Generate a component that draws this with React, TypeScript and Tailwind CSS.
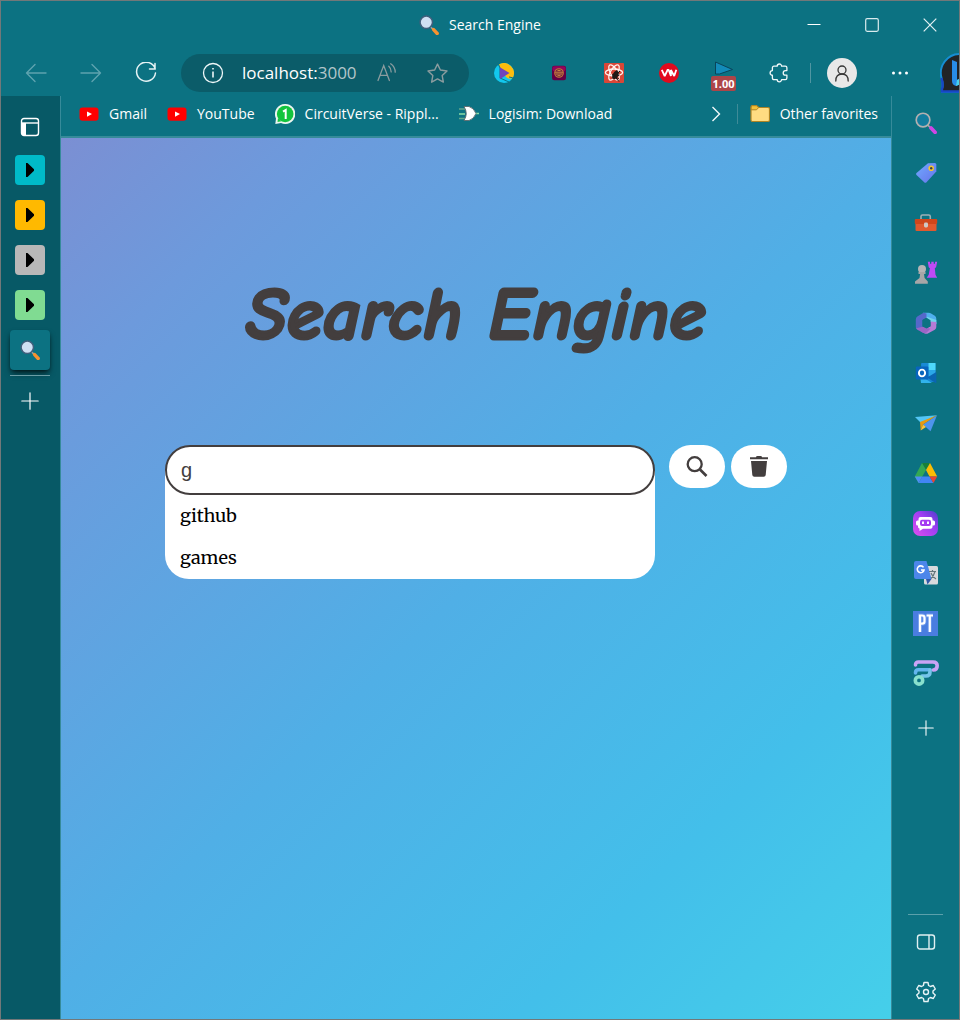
import { useState } from "react";
import type { ReactNode } from "react";

function Magnifier({ handle = "#f7922f", rim = "#3f5f7c", lens = "#cfe0f3", className = "size-5" }) {
  return (
    <svg viewBox="0 0 20 20" className={className} aria-hidden="true">
      <path d="M11.5 12 14.6 14.6" stroke="#a9a3a6" strokeWidth="1.6" />
      <path d="m14.6 14.6 3.6 3.9" stroke={handle} strokeWidth="3.4" strokeLinecap="round" />
      <circle cx="7.3" cy="7.3" r="6.200" fill={lens} stroke={rim} strokeWidth="1.5" />
    </svg>
  );
}

function YouTubeIcon() {
  return (
    <svg viewBox="0 0 20 20" className="size-5" aria-hidden="true">
      <rect x="0.5" y="3.4" width="19" height="13.4" rx="3" fill="#f00" />
      <path d="m8 7.4 5 2.7-5 2.7z" fill="#fff" />
    </svg>
  );
}

function Arrow({ flip = false }) {
  return (
    <svg viewBox="0 0 22 22" className={flip ? "size-[22px] rotate-180" : "size-[22px]"} fill="none" stroke="#5ea3af" strokeWidth="1.4" strokeLinecap="round" strokeLinejoin="round" aria-hidden="true">
      <path d="M21 11H1.5M10 2.5 1.5 11l8.500 8.500" />
    </svg>
  );
}

function Plus({ className }: { className: string }) {
  return (
    <svg viewBox="0 0 18 18" className={className} stroke="#fff" strokeWidth="1.200" strokeLinecap="round" aria-hidden="true">
      <path d="M9 .8v16.400M.8 9h16.400" />
    </svg>
  );
}

const extensions: { name: string; icon: ReactNode }[] = [
  {
    name: "Video player",
    icon: (
      <svg viewBox="0 0 20 20" className="size-5">
        <circle cx="10" cy="10" r="10" fill="#12c8ee" />
        <path d="M5 1.400A10 10 0 0 1 18.700 14.800Q15 17 12 14L6 5z" fill="#fdbd0d" />
        <path d="M4.500 1.500 6 5v10l9 4M15 14l3.800.8" stroke="#0c7282" strokeWidth="1" fill="none" />
        <path d="M5.800 4.200 15.500 10l-9.700 6.200z" fill="#7044bb" />
      </svg>
    ),
  },
  {
    name: "Emblem",
    icon: (
      <svg viewBox="0 0 16 16" className="size-4">
        <rect x="1" y=".8" width="14" height="14.400" rx="2.200" fill="#650044" />
        <rect x="1.500" y="1.200" width="13" height="5" rx="2" fill="#94045b" />
        <circle cx="8" cy="8" r="4.300" fill="#70213a" stroke="#be7a39" strokeWidth="1.100" />
        <path d="M4 7.200h8M4.500 9h7M6.500 5.500h3M6.500 10.600h3" stroke="#ca8341" />
      </svg>
    ),
  },
  {
    name: "Component inspector",
    icon: (
      <svg viewBox="0 0 20 20" className="size-5">
        <rect width="20" height="20" rx="1" fill="#da4637" />
        <g fill="none" stroke="#fff3ef" strokeWidth="1.300">
          <ellipse cx="10" cy="9.500" rx="8.600" ry="3.500" />
          <ellipse cx="10" cy="9.500" rx="8.600" ry="3.500" transform="rotate(60 10 9.500)" />
          <ellipse cx="10" cy="9.500" rx="8.600" ry="3.500" transform="rotate(-60 10 9.500)" />
        </g>
        <ellipse cx="11.500" cy="12" rx="2.800" ry="4.400" transform="rotate(28 11.500 12)" fill="#201816" />
        <path d="m8 11.500 7 4.500M8.500 15l7-3M12 9l1-2M14 10l2-2M10 12.500l5 6" stroke="#201816" strokeWidth="1" />
      </svg>
    ),
  },
  {
    name: "VW reader",
    icon: (
      <svg viewBox="0 0 20 20" className="size-5">
        <circle cx="10" cy="10" r="10" fill="#e20a1d" />
        <path d="m2.800 6.800 2.900 6.200 2.900-6.200M7.900 6.800h1.700l2.300 6.200V7l3.300 6 2.100-6.200" fill="none" stroke="#fff" strokeWidth="1.800" strokeLinejoin="bevel" />
      </svg>
    ),
  },
];

function TextAloud() {
  return (
    <svg viewBox="0 0 20 20" className="size-5" fill="none" stroke="#8b9c9f" strokeWidth="1.300" strokeLinecap="round" aria-hidden="true">
      <path d="m1 17.500 5.700-15 5.700 15M3 12.300h7.500M11.800 3.300q2.400 2.200 2.400 5.600M13.700.8q4.500 3.200 4.500 8.400" />
    </svg>
  );
}

const railApps: { name: string; icon: ReactNode }[] = [
  { name: "Search", icon: <Magnifier handle="#cf47e5" rim="#b3b0b0" lens="#127d9f" className="size-[22px]" /> },
  {
    name: "Shopping",
    icon: (
      <svg viewBox="0 0 22 22" className="size-[22px]">
        <defs><linearGradient id="tag" x2="1" y2="1"><stop stopColor="#71aaff" /><stop offset="1" stopColor="#6673e9" /></linearGradient></defs>
        <path d="M13 1.200 19.800 1q1.500 0 1.500 1.500v7L11.500 20.300q-1.200 1-2.300 0L1.500 13q-1-1 0-2.100z" fill="url(#tag)" />
        <circle cx="16.200" cy="6.200" r="2.800" fill="#f4c22f" /><circle cx="16.200" cy="6.200" r="1.200" fill="#354155" />
      </svg>
    ),
  },
  {
    name: "Tools",
    icon: (
      <svg viewBox="0 0 24 22" className="h-[22px] w-6">
        <path d="M7 7V4.500Q7 3 8.500 3h6.300q1.500 0 1.500 1.500V7" fill="none" stroke="#9db0b5" strokeWidth="1.600" />
        <rect x="1.500" y="9" width="21" height="10" rx="1" fill="#e0592e" />
        <rect x=".8" y="7" width="22.400" height="5" rx="1" fill="#cf461b" />
        <rect x="10" y="10.500" width="4" height="5" rx="1.400" fill="#d0c8c5" />
      </svg>
    ),
  },
  {
    name: "Games",
    icon: (
      <svg viewBox="0 0 24 24" className="size-6">
        <path d="M13.800.8h2.200v2h1.300v-2h2.400v2H21v-2h2.200l-1.100 5.500-1.300 1 .7 6.500 1.700 3H12.700l2-3 1.200-6.500-1.200-1z" fill="#bf4af6" />
        <circle cx="8" cy="8" r="4" fill="#b6b4b5" />
        <path d="M4.500 11h7v2H10l.6 4 3.200 3.500v2.200H1v-2.200L5.500 17l.6-4H4.500z" fill="#a8a6a7" />
      </svg>
    ),
  },
  {
    name: "Microsoft 365",
    icon: (
      <svg viewBox="0 0 22 22" className="size-[22px]">
        <path d="M8 .8h5.500q1.500 0 3 .9l3.300 2q1.500 1 1.500 3V12l-6-3.500L9 5z" fill="#4fb0ef" />
        <path d="M11 4.500 21.300 8v3.500q0 1-1 1.500l-5-3z" fill="#72d4ec" />
        <path d="M21.300 10v5q0 1.800-1.500 2.700l-6.500 3.500q-2 1-4 0L6 19.300l9.500-5V9.500z" fill="#b77bd5" />
        <path d="M8.500.8 2.300 4.500Q.8 5.500.8 7.500V15q0 1.700 1.500 2.600l1.500.9 3.700-2.300V8l4-2.500V1.500z" fill="#5568ca" />
        <path d="M1.200 16.200q.4 1 1.500 1.600l5 3q2 1 4-.2l3.800-3.800-7.900-2z" fill="#9b65c5" />
        <path d="m7.500 8 4-2.300 4 2.500v6l-4 2.300-4-2.300z" fill="#0c7282" />
      </svg>
    ),
  },
  {
    name: "Outlook",
    icon: (
      <svg viewBox="0 0 22 22" className="size-[22px]">
        <rect x="6" y="1" width="14.500" height="19" rx="1" fill="#1685d3" />
        <path d="M7 1h6.500v7H7z" fill="#198bd5" /><path d="M13.500 1h7v7h-7z" fill="#4fd8fa" /><path d="M13.500 8h7v6h-7z" fill="#2ba7e8" />
        <path d="m21.300 10-9 5.500 8.200 5.500h.8z" fill="#0b65b1" /><path d="M5 13.500 17 21H6z" fill="#31b3ed" />
        <rect x=".8" y="4.500" width="12.600" height="13" rx="1.200" fill="#0865bd" />
        <ellipse cx="7" cy="11" rx="3.100" ry="3.400" fill="none" stroke="#fff" strokeWidth="1.900" />
      </svg>
    ),
  },
  {
    name: "Drop",
    icon: (
      <svg viewBox="0 0 24 22" className="h-[22px] w-6">
        <path d="m1 5 22-1.800L7 11z" fill="#54c6f6" /><path d="m23 3.200-6.500 16L9 12.500z" fill="#4f94ed" />
        <path d="M6 10 23 3.200 9 12.500l-2.300 6z" fill="#e99a10" /><path d="m9 12.500 3 2.500-5.300 3.500z" fill="#ffc33a" />
      </svg>
    ),
  },
  {
    name: "Google Drive",
    icon: (
      <svg viewBox="0 0 24 22" className="h-[22px] w-6">
        <path d="M8 1h8l-4 7z" fill="#188038" /><path d="M8 1 .8 14.500l3.800 6.500L12 8z" fill="#34a853" />
        <path d="M16 1 23.200 14.500h-7.700L12 8z" fill="#fbbc04" /><path d="m4.600 21 3.700-6.500h7.200l3.900 6.500z" fill="#4285f4" />
        <path d="M.8 14.500h7.500L4.600 21z" fill="#4c8cf5" /><path d="M15.500 14.500h7.700L19.400 21z" fill="#ea4335" />
      </svg>
    ),
  },
  {
    name: "Chat bot",
    icon: (
      <svg viewBox="0 0 25 25" className="size-[25px]">
        <defs><linearGradient id="bot" x1="1" x2="0" y2="1"><stop stopColor="#4c3fc9" /><stop offset=".4" stopColor="#9d3df3" /><stop offset="1" stopColor="#dd50ee" /></linearGradient></defs>
        <rect width="25" height="25" rx="7" fill="url(#bot)" />
        <path d="M7.500 6h10q2 0 2 2v1.500h1q1.500 0 1.500 1.500v2q0 1.500-1.500 1.500h-1V16q0 1.700-2 1.700H10L6.500 20v-2.500q-1.500-.3-1.500-1.500v-1.500H4.500Q3 14.500 3 13v-2q0-1.500 1.500-1.500H5.500V8q0-2 2-2z" fill="#fff" />
        <rect x="7" y="8.700" width="11" height="6.200" rx="2" fill="#a53af1" /><path d="M10 10.500v2.600M15 10.500v2.600" stroke="#fff" strokeWidth="1.900" />
      </svg>
    ),
  },
  {
    name: "Google Translate",
    icon: (
      <svg viewBox="0 0 24 24" className="size-6">
        <rect x="10" y="5" width="14" height="18.500" rx="1.500" fill="#d8dadd" />
        <path d="M2 0h10.500l5 18H2q-2 0-2-2V2q0-2 2-2z" fill="#4c86ea" /><path d="m17.500 18-4 5.500L12 18z" fill="#3158a9" />
        <path d="M9.500 6.400A3.400 3.400 0 1 0 10 9H7" fill="none" stroke="#fff" strokeWidth="1.600" />
        <path d="M15 10.500h7M18.500 9v1.500M21 10.500q-1.500 5-4 7M17 12q1.500 4 5 6" fill="none" stroke="#64777c" strokeWidth="1.200" />
      </svg>
    ),
  },
  {
    name: "PT",
    icon: (
      <svg viewBox="0 0 25 25" className="size-[25px]">
        <rect width="25" height="25" fill="#4a7de0" />
        <path d="M7 21V4.500h2q2.500 0 2.500 2.300v3.700q0 2.200-2.500 2.200H7M13.500 4.500h6.500M16.800 4.500V21" fill="none" stroke="#a9caff" strokeWidth="4" opacity=".35" />
        <path d="M7 21V4.500h2q2.500 0 2.500 2.300v3.700q0 2.200-2.500 2.200H7M13.500 4.500h6.500M16.800 4.500V21" fill="none" stroke="#fff" strokeWidth="2.200" />
      </svg>
    ),
  },
  {
    name: "Flow",
    icon: (
      <svg viewBox="0 0 26 26" className="size-[26px]" fill="none" strokeWidth="3.600" strokeLinecap="round">
        <path d="M2.500 5q0-3 3-3H20q4.200 0 4.200 3.800 0 4.200-4 4.200" stroke="#c9a3f5" />
        <path d="M2.500 13q0-3.200 3-3.200H17" stroke="#62b5ed" /><path d="M17 10v2q0 4-4 4H9" stroke="#75c4ea" />
        <circle cx="6" cy="20.400" r="3.700" stroke="#88e0cd" />
      </svg>
    ),
  },
];

function TabGroup({ label, className }: { label: string; className: string }) {
  return (
    <button aria-label={label} className={`flex size-[30px] items-center justify-center rounded ${className}`}>
      <svg viewBox="0 0 8 14" className="h-3.5 w-2" aria-hidden="true"><path d="M0 0h1.500L8 6.200v1.600L1.500 14H0z" /></svg>
    </button>
  );
}

function TitleBar() {
  return (
    <header className="flex h-12 items-center">
      <div className="w-[174px]" />
      <div className="flex flex-1 items-center justify-center gap-2.5 text-sm">
        <Magnifier />
        <span>Search Engine</span>
      </div>
      <div className="flex w-[174px] items-center">
        <button aria-label="Minimize" className="flex h-8 flex-1 items-center justify-center"><svg viewBox="0 0 14 14" className="size-3.5" stroke="#fff"><path d="M.5 6.500h13" /></svg></button>
        <button aria-label="Maximize" className="flex h-8 flex-1 items-center justify-center"><svg viewBox="0 0 14 14" className="size-3.5" fill="none" stroke="#d9ebee" strokeWidth="1.200"><rect x=".7" y=".7" width="12.600" height="12.600" rx="1.500" /></svg></button>
        <button aria-label="Close" className="flex h-8 flex-1 items-center justify-center"><svg viewBox="0 0 14 14" className="size-3.5" stroke="#e5f2f4" strokeWidth="1.200"><path d="m.7.7 12.600 12.600m0-12.600L.7 13.300" /></svg></button>
      </div>
    </header>
  );
}

function NavBar() {
  return (
    <nav className="flex h-12 items-center pl-[7px]">
      <button aria-label="Back" className="flex w-[55px] shrink-0 justify-center"><Arrow /></button>
      <button aria-label="Forward" className="flex w-[55px] shrink-0 justify-center"><Arrow flip /></button>
      <button aria-label="Refresh" className="flex w-[55px] shrink-0 justify-center">
        <svg viewBox="0 0 22 22" className="size-[22px]" fill="none" stroke="#e6f3f5" strokeWidth="1.500" strokeLinecap="round"><path d="M20.200 7A9.500 9.500 0 1 0 20.500 11M20 1.500V7h-5.500" /></svg>
      </button>
      <div className="mr-[7px] ml-2 flex h-[38px] min-w-0 flex-1 items-center rounded-full bg-[#0b5c69] pr-5 pl-[21px]">
        <svg viewBox="0 0 22 22" className="size-[22px] shrink-0" fill="none" stroke="#eef7f8" strokeWidth="1.300" aria-hidden="true"><circle cx="11" cy="11" r="9.500" /><path d="M11 9.500v6M11 6v1.600" strokeWidth="1.600" /></svg>
        <p className="ml-[18px] min-w-0 flex-1 text-[17px] text-white">localhost:<span className="text-[#b3c6ca]">3000</span></p>
        <button aria-label="Read aloud" className="mr-[29px]"><TextAloud /></button>
        <button aria-label="Add to favorites">
          <svg viewBox="0 0 24 24" className="size-[23px]" fill="none" stroke="#8b9c9f" strokeWidth="1.500" strokeLinejoin="round"><path d="m12 2.200 3 6.200 6.900.9-5 4.800 1.200 6.900-6.100-3.300L5.900 21l1.200-6.900-5-4.800 6.900-.9z" /></svg>
        </button>
      </div>
      {extensions.map((e) => (
        <button key={e.name} aria-label={e.name} className="flex w-[55px] shrink-0 justify-center">{e.icon}</button>
      ))}
      <button aria-label="Playback speed" className="relative flex h-10 w-[55px] shrink-0 justify-center pt-2">
        <svg viewBox="0 0 20 14" className="h-3.5 w-5"><path d="M1.500 1v12h4L18.500 8.500z" fill="#138bb9" stroke="#09455a" /></svg>
        <span className="absolute top-[23px] rounded-xs bg-[#ad4548] px-0.5 font-['Noto_Sans'] text-[11px] leading-[15px] font-bold text-white">1.00</span>
      </button>
      <button aria-label="Extensions" className="flex w-[55px] shrink-0 justify-center">
        <svg viewBox="0 0 20 20" className="size-5" fill="none" stroke="#f0f8f9" strokeWidth="1.300" strokeLinejoin="round"><path d="M5 3.200h3.200a2.200 2.200 0 0 1 4.400 0h3.700q1.600 0 1.600 1.600v2.800h-1.400a2.200 2.200 0 0 0 0 4.600h1.400V15q0 1.600-1.600 1.600h-3.700a2.200 2.200 0 0 1-4.400 0H5q-1.600 0-1.600-1.600v-2.800a2.200 2.200 0 0 1 0-4.600V4.800Q3.400 3.200 5 3.200z" /></svg>
      </button>
      <span className="ml-1 h-5 w-px shrink-0 bg-[#5096a2]" />
      <button aria-label="Profile" className="ml-4 flex size-[30px] shrink-0 items-center justify-center rounded-full bg-[#e8e8e8]">
        <svg viewBox="0 0 18 18" className="size-[18px]" fill="none" stroke="#363636" strokeWidth="1.300" strokeLinecap="round"><circle cx="9" cy="6" r="4" /><path d="M2.800 17q0-7 6.200-7t6.200 7" /></svg>
      </button>
      <button aria-label="Settings and more" className="ml-7 flex w-[30px] shrink-0 justify-center">
        <svg viewBox="0 0 18 6" className="w-[18px]" fill="#fff"><circle cx="2.500" cy="3" r="1.500" /><circle cx="9" cy="3" r="1.500" /><circle cx="15.500" cy="3" r="1.500" /></svg>
      </button>
      <button aria-label="Bing chat" className="ml-[25px] w-[19px] shrink-0 overflow-hidden">
        <svg viewBox="0 0 40 40" className="size-10 max-w-none">
          <path d="M20 1a19 19 0 0 1 0 38H2V36q1.500-4-.5-11A19 19 0 0 1 20 1z" fill="#222426" stroke="#168ed2" strokeWidth="2" />
          <path d="M1.500 25q2 7 .5 11v2.500H20" fill="none" stroke="#1747c5" strokeWidth="2.400" />
          <path d="M12 7 17 9v18l8-4v6l-9 4q-4-1-4-5z" fill="#288de8" /><path d="m17 27 8-4v6l-9 4z" fill="#48d3ed" />
        </svg>
      </button>
    </nav>
  );
}

function Bookmark({ label, icon }: { label: string; icon: ReactNode }) {
  return <a href="#" className="flex shrink-0 items-center gap-2.5">{icon}<span>{label}</span></a>;
}

function BookmarksBar() {
  return (
    <div className="flex h-[42px] items-center gap-5 border-b-2 border-[#368b9a] pr-[13px] pb-1 pl-[18px] text-sm">
      <Bookmark label="Gmail" icon={<YouTubeIcon />} />
      <Bookmark label="YouTube" icon={<YouTubeIcon />} />
      <Bookmark
        label="CircuitVerse - Rippl..."
        icon={
          <svg viewBox="0 0 20 20" className="size-5" aria-hidden="true">
            <path d="M10 0a10 10 0 1 1-4 19L.3 20 1 14.500A10 10 0 0 1 10 0z" fill="#ecf5f0" /><circle cx="10.200" cy="10" r="8.300" fill="#13c43d" /><path d="m3 14-.5 4 4-.8z" fill="#13c43d" />
            <path d="M8 7.600 10.700 6v9" fill="none" stroke="#fff" strokeWidth="2" />
          </svg>
        }
      />
      <Bookmark
        label="Logisim: Download"
        icon={
          <svg viewBox="0 0 20 20" className="size-5" aria-hidden="true">
            <path d="M0 5h6M0 14.500h6" stroke="#61a68c" strokeWidth="1.500" /><path d="M0 10h6M16 9.500h4" stroke="#8bdda6" strokeWidth="1.500" />
            <path d="M5 2.500h5q5 1.500 7 7-2 5.500-7 7H5q4.500-7 0-14z" fill="#fff" stroke="#5d6a6d" strokeWidth=".9" />
          </svg>
        }
      />
      <div className="ml-auto flex shrink-0 items-center">
        <button aria-label="More favorites" className="mr-4"><svg viewBox="0 0 10 18" className="h-[18px] w-2.5" fill="none" stroke="#f2f9fa" strokeWidth="1.400"><path d="m1.500 2 7 7-7 7" /></svg></button>
        <span className="mr-3 h-5 w-px bg-[#3f8b98]" />
        <Bookmark
          label="Other favorites"
          icon={
            <svg viewBox="0 0 20 20" className="size-5" aria-hidden="true">
              <path d="M1 4.500V3q0-1.500 1.500-1.500h4l2.300 2H18q1.500 0 1.500 1.500v11q0 1.500-1.500 1.500H2.500Q1 17.500 1 16z" fill="#ffdc82" stroke="#ae8424" strokeWidth="1.200" />
              <path d="M1.200 5.800V3q0-1.300 1.300-1.300h4l2 2-2 2.100z" fill="#f4c239" stroke="#ae8424" />
            </svg>
          }
        />
      </div>
    </div>
  );
}

function SearchPage() {
  const [query, setQuery] = useState("g");
  return (
    <main className="flex flex-1 flex-col items-center bg-[linear-gradient(135deg,#7b8fd3_0%,#6d9adc_15%,#50afe6_50%,#43bfea_78%,#45cfea_100%)]">
      <h1 className="mt-[131px] font-['Comic_Sans_MS','Comic_Neue','Open_Sans',sans-serif] text-[74px] leading-[92px] font-bold text-[#433e3e] italic [-webkit-text-stroke:3px_#433e3e]">Search Engine</h1>
      <form className="mt-[84px] flex items-start" onSubmit={(e) => e.preventDefault()}>
        <div className="w-[490px]">
          <input
            aria-label="Search"
            value={query}
            onChange={(e) => setQuery(e.target.value)}
            className="relative z-10 block h-[50px] w-full rounded-full border-2 border-[#433e3e] bg-white px-3.5 font-['Liberation_Sans',sans-serif] text-xl text-[#433e3e] outline-none"
          />
          <ul className="-mt-6 rounded-b-3xl bg-white pt-6 font-['Merriweather','DejaVu_Serif',serif] text-lg text-black">
            <li className="flex h-[42px] items-center px-[15px]">github</li>
            <li className="flex h-[42px] items-center px-[15px]">games</li>
          </ul>
        </div>
        <button type="submit" aria-label="Search" className="ml-3.5 flex h-[43px] w-14 items-center justify-center rounded-full bg-white">
          <svg viewBox="0 0 22 22" className="size-[22px]" fill="none" stroke="#433e3e"><circle cx="8.700" cy="8.200" r="7" strokeWidth="2.300" /><path d="m14 13.500 6.500 6.500" strokeWidth="2.700" /></svg>
        </button>
        <button type="button" aria-label="Clear" onClick={() => setQuery("")} className="ml-1.5 flex h-[43px] w-14 items-center justify-center rounded-full bg-white">
          <svg viewBox="0 0 18 22" className="h-[22px] w-[18px]" fill="#433e3e"><path d="M0 1.200h6Q6 0 7.500 0h3Q12 0 12 1.200h6v2H0zM1 5h16l-1.300 14q-.2 1.800-2 1.800H4.300q-1.800 0-2-1.800z" /></svg>
        </button>
      </form>
    </main>
  );
}

export default function App() {
  return (
    <div className="flex min-h-screen flex-col border border-[#727879] bg-[#0c7282] font-['Segoe_UI','Open_Sans',sans-serif] text-white">
      <TitleBar />
      <NavBar />
      <div className="-mt-px flex flex-1">
        <aside className="flex w-[60px] shrink-0 flex-col items-center border-r border-[#368b9a] bg-[#075966] pr-px">
          <button aria-label="Tab actions" className="mt-[17px] flex h-7 items-center">
            <svg viewBox="0 0 20 20" className="size-5" fill="none" stroke="#fff" strokeWidth="1.400"><rect x="1.500" y="1.500" width="17" height="17" rx="2.500" /><path d="M2 6h16" /><path d="M1.500 6h4.500v12.500H3.500q-2 0-2-2z" fill="#fff" stroke="none" /></svg>
          </button>
          <div className="mt-3.5 flex flex-col gap-[15px]">
            <TabGroup label="Cyan tab group" className="bg-[#00bac8]" />
            <TabGroup label="Yellow tab group" className="bg-[#ffb900]" />
            <TabGroup label="Gray tab group" className="bg-[#b8b8b8]" />
            <TabGroup label="Green tab group" className="bg-[#80db92]" />
          </div>
          <button aria-label="Search Engine tab" className="mt-2.5 flex size-10 items-center justify-center rounded bg-[#0c7282] shadow-md shadow-black/60"><Magnifier /></button>
          <hr className="mt-[5px] w-10 border-[#6a9da5]" />
          <button aria-label="New tab" className="mt-4"><Plus className="size-[18px]" /></button>
        </aside>
        <div className="flex min-w-0 flex-1 flex-col">
          <BookmarksBar />
          <SearchPage />
        </div>
        <aside className="flex w-[68px] shrink-0 flex-col items-center border-l border-[#368b9a] pt-0.5 pb-0.5">
          {railApps.map((a) => (
            <button key={a.name} aria-label={a.name} className="flex h-[50px] w-full items-center justify-center">{a.icon}</button>
          ))}
          <button aria-label="Customize sidebar" className="flex h-[60px] items-center"><Plus className="size-4" /></button>
          <hr className="mt-auto mb-0.5 w-[35px] border-[#5ba0ab]" />
          <button aria-label="Hide sidebar" className="flex h-[50px] items-center">
            <svg viewBox="0 0 20 20" className="size-5" fill="none" stroke="#e1f0f2" strokeWidth="1.400"><rect x="1.500" y="3" width="17" height="14" rx="2.500" /><path d="M13 3v14" /></svg>
          </button>
          <button aria-label="Settings" className="flex h-[50px] items-center">
            <svg viewBox="0 0 22 22" className="size-[22px]" fill="none" stroke="#e9f4f6" strokeWidth="1.400" strokeLinejoin="round"><path d="M9 1.500h4l.6 3 1.800 1 2.900-1 2 3.500L18 10v2l2.300 2-2 3.500-2.900-1-1.800 1-.6 3H9l-.6-3-1.800-1-2.900 1-2-3.500L4 12v-2L1.700 8l2-3.500 2.900 1 1.800-1z" /><circle cx="11" cy="11" r="2.500" /></svg>
          </button>
        </aside>
      </div>
    </div>
  );
}
